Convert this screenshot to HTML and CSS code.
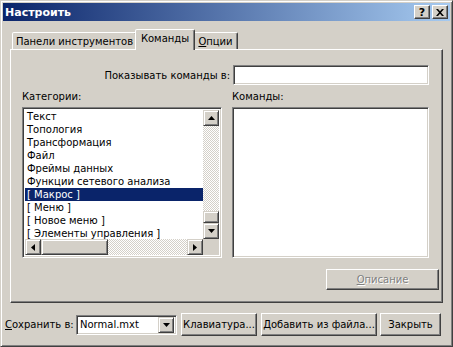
FILE: index.html
```html
<!DOCTYPE html>
<html lang="ru">
    <head>
        <meta charset="UTF-8" />
        <title>Настроить</title>
        <link rel="stylesheet" href="styles.css">
    </head>
    <body>
        <div class="window">
            <div class="titlebar">
                <span class="title">Настроить</span>
                <div class="caption-btns">
                    <span class="cap-btn help">?</span>
                    <span class="cap-btn">
                        <svg width="8" height="7" viewBox="0 0 8 7">
                            <path d="M0 0h2l2 2.3L6 0h2L5 3.5 8 7H6L4 4.7 2 7H0l3-3.5z" fill="#000"/>
                        </svg>
                    </span>
                </div>
            </div>

            <div class="tabs">
                <div class="tab tab-toolbars">Панели инструментов</div>
                <div class="tab tab-commands active">Команды</div>
                <div class="tab tab-options"><u>О</u>пции</div>
            </div>

            <div class="panel">
                <div class="show-row">
                    <span class="label">Показывать команды в:</span>
                    <div class="field show-field"></div>
                </div>

                <div class="lists">
                    <div class="col col-left">
                        <div class="caption">Категории:</div>
                        <div class="listbox">
                            <div class="items">
                                <div class="item">Текст</div>
                                <div class="item">Топология</div>
                                <div class="item">Трансформация</div>
                                <div class="item">Файл</div>
                                <div class="item">Фреймы данных</div>
                                <div class="item">Функции сетевого анализа</div>
                                <div class="item selected">[ Макрос ]</div>
                                <div class="item">[ Меню ]</div>
                                <div class="item">[ Новое меню ]</div>
                                <div class="item">[ Элементы управления ]</div>
                            </div>
                            <div class="vscroll">
                                <span class="sbtn">
                                    <svg width="7" height="4" viewBox="0 0 7 4"><path d="M3.5 0L7 4H0z" fill="#000"/></svg>
                                </span>
                                <span class="track"></span>
                                <span class="thumb"></span>
                                <span class="sbtn">
                                    <svg width="7" height="4" viewBox="0 0 7 4"><path d="M0 0h7L3.5 4z" fill="#000"/></svg>
                                </span>
                            </div>
                            <div class="hscroll">
                                <span class="sbtn">
                                    <svg width="4" height="7" viewBox="0 0 4 7"><path d="M0 3.5L4 0v7z" fill="#000"/></svg>
                                </span>
                                <span class="thumb hthumb"></span>
                                <span class="track"></span>
                                <span class="sbtn">
                                    <svg width="4" height="7" viewBox="0 0 4 7"><path d="M0 0l4 3.5L0 7z" fill="#000"/></svg>
                                </span>
                            </div>
                            <div class="corner"></div>
                        </div>
                    </div>
                    <div class="col col-right">
                        <div class="caption">Команды:</div>
                        <div class="listbox empty"></div>
                    </div>
                </div>

                <div class="desc-row">
                    <span class="btn disabled btn-desc"><u>О</u>писание</span>
                </div>
            </div>

            <div class="footer">
                <span class="label save-label"><u>С</u>охранить в:</span>
                <div class="field combo">
                    <span class="combo-text">Normal.mxt</span>
                    <span class="sbtn combo-btn">
                        <svg width="7" height="4" viewBox="0 0 7 4"><path d="M0 0h7L3.5 4z" fill="#000"/></svg>
                    </span>
                </div>
                <span class="btn btn-keys">Клавиатура...</span>
                <span class="btn btn-add"><u>Д</u>обавить из файла...</span>
                <span class="btn btn-close">Закрыть</span>
            </div>
        </div>
    </body>
</html>
```

FILE: styles.css
```css
body {
    margin: 0;
    background: #d4d0c8;
    font-family: 'DejaVu Sans', sans-serif;
    font-size: 10px;
    color: #000;
}

.window {
    width: 453px;
    height: 347px;
    box-sizing: border-box;
    padding: 2px;
    background: #d4d0c8;
    border: 1px solid;
    border-color: #d4d0c8 #404040 #404040 #d4d0c8;
    box-shadow: inset 1px 1px #fff, inset -1px -1px #808080;
    white-space: nowrap;
}

/* title bar */
.titlebar {
    height: 18px;
    display: flex;
    align-items: center;
    justify-content: space-between;
    background: linear-gradient(to right, #0a246a, #a6caf0);
}
.title {
    padding-left: 2px;
    color: #fff;
    font-weight: bold;
    font-size: 11px;
}
.caption-btns {
    display: flex;
    gap: 2px;
    padding-right: 2px;
}
.cap-btn {
    width: 16px;
    height: 14px;
    box-sizing: border-box;
    display: flex;
    align-items: center;
    justify-content: center;
    background: #d4d0c8;
    border: 1px solid;
    border-color: #fff #404040 #404040 #fff;
    box-shadow: inset -1px -1px #808080;
}
.cap-btn.help {
    font-weight: bold;
    font-size: 11px;
    line-height: 1;
}

/* tabs */
.tabs {
    display: flex;
    align-items: flex-end;
    height: 21px;
    margin-top: 7px;
    padding-left: 9px;
    position: relative;
    z-index: 1;
}
.tab {
    height: 17px;
    box-sizing: border-box;
    display: flex;
    align-items: center;
    justify-content: center;
    border: 1px solid;
    border-bottom: none;
    border-color: #fff #404040 transparent #fff;
    border-radius: 2px 2px 0 0;
    box-shadow: inset -1px 0 #808080;
    background: #d4d0c8;
}
.tab-toolbars {
    width: 125px;
}
.tab-commands {
    width: 60px;
    margin: 0 -2px;
}
.tab-options {
    width: 45px;
    position: relative;
    z-index: 0;
}
.tab.active {
    height: 21px;
    margin-bottom: -1px;
    padding-bottom: 3px;
    position: relative;
    z-index: 2;
}

/* panel */
.panel {
    height: 254px;
    margin-left: 7px;
    width: 433px;
    box-sizing: border-box;
    border: 1px solid;
    border-color: #fff #404040 #404040 #fff;
    box-shadow: inset -1px -1px #808080;
}
.show-row {
    display: flex;
    justify-content: flex-end;
    align-items: center;
    gap: 3px;
    padding: 15px 13px 0 0;
}
.field {
    box-sizing: border-box;
    background: #fff;
    border: 1px solid;
    border-color: #808080 #fff #fff #808080;
    box-shadow: inset 1px 1px #404040, inset -1px -1px #d4d0c8;
}
.show-field {
    width: 196px;
    height: 20px;
}

.lists {
    display: flex;
    gap: 10px;
    padding: 5px 0 0 11px;
}
.col-left {
    width: 200px;
}
.col-right {
    width: 197px;
}
.caption {
    line-height: 13px;
    height: 17px;
}
.listbox {
    height: 151px;
    box-sizing: border-box;
    padding: 2px;
    background: #fff;
    border: 1px solid;
    border-color: #808080 #fff #fff #808080;
    box-shadow: inset 1px 1px #404040, inset -1px -1px #d4d0c8;
    display: grid;
    grid-template-columns: 1fr 16px;
    grid-template-rows: 1fr 16px;
}
.listbox.empty {
    display: block;
}
.items {
    overflow: hidden;
}
.item {
    height: 13px;
    line-height: 13px;
    padding-left: 2px;
}
.item.selected {
    background: #0a246a;
    color: #fff;
}

/* scroll bars */
.vscroll {
    display: flex;
    flex-direction: column;
}
.hscroll {
    display: flex;
}
.sbtn,
.thumb {
    flex: none;
    width: 16px;
    height: 16px;
    box-sizing: border-box;
    display: flex;
    align-items: center;
    justify-content: center;
    background: #d4d0c8;
    border: 1px solid;
    border-color: #d4d0c8 #404040 #404040 #d4d0c8;
    box-shadow: inset 1px 1px #fff, inset -1px -1px #808080;
}
.vscroll .thumb {
    height: 12px;
}
.hthumb {
    width: 67px;
}
.track {
    flex: 1;
    background: repeating-conic-gradient(#d4d0c8 0 25%, #fff 0 50%) 0 0 / 2px 2px;
}
.corner {
    background: #d4d0c8;
}

.desc-row {
    display: flex;
    justify-content: flex-end;
    padding: 11px 3px 0 0;
}

/* buttons */
.btn {
    box-sizing: border-box;
    display: flex;
    align-items: center;
    justify-content: center;
    height: 23px;
    background: #d4d0c8;
    border: 1px solid;
    border-color: #fff #404040 #404040 #fff;
    box-shadow: inset -1px -1px #808080;
}
.btn-desc {
    width: 113px;
    height: 21px;
}
.btn.disabled {
    color: #808080;
    text-shadow: 1px 1px #fff;
}

/* footer */
.footer {
    display: flex;
    align-items: center;
    margin-top: 10px;
    padding-left: 2px;
}
.save-label {
    width: 71px;
}
.combo {
    width: 101px;
    height: 20px;
    display: flex;
    align-items: center;
    justify-content: space-between;
    padding: 2px;
    margin-right: 4px;
}
.combo-text {
    padding-left: 1px;
}
.btn-keys {
    width: 76px;
    margin-right: 4px;
}
.btn-add {
    width: 116px;
    margin-right: 3px;
}
.btn-close {
    width: 61px;
}
```
